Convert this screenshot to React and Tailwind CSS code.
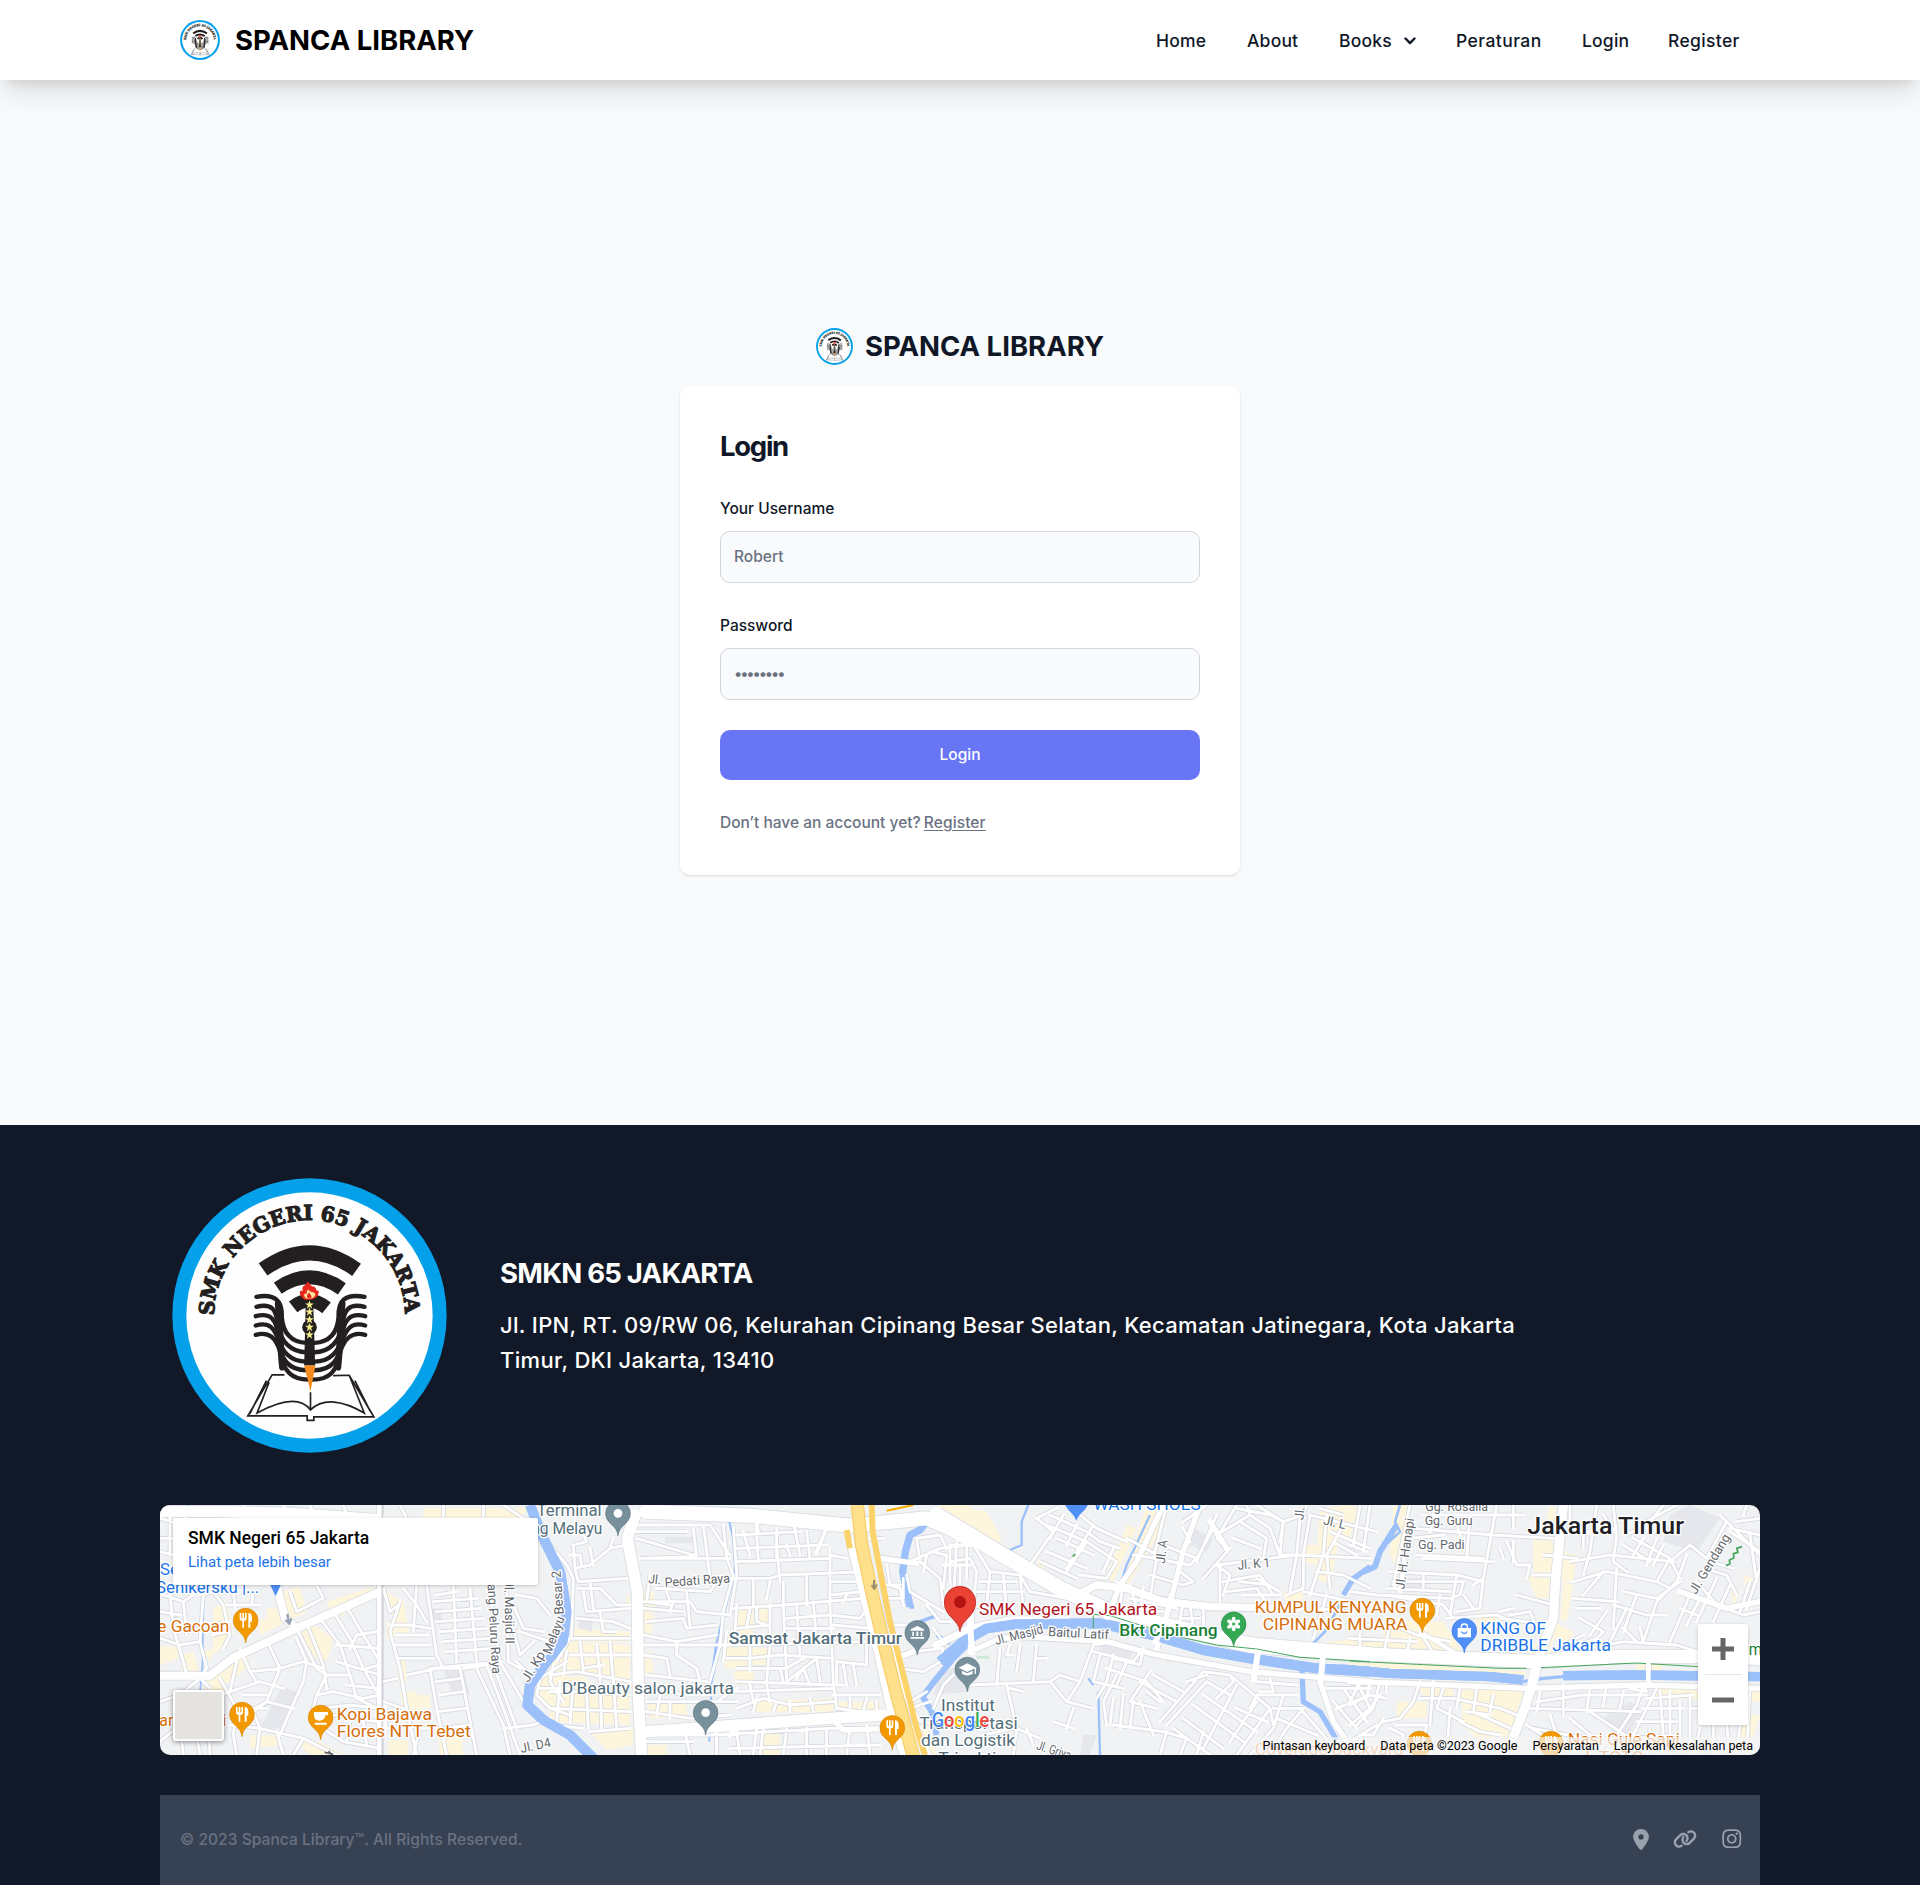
import React, { useId } from "react";
import { FaLocationDot, FaLink, FaInstagram } from "react-icons/fa6";

function SchoolLogo({ className }) {
  const arc = useId();
  return (
    <svg viewBox="37 38 824 824" className={className} aria-label="SMK Negeri 65 Jakarta">
      <circle cx="449" cy="450" r="411" fill="#05a0ea" />
      <circle cx="449" cy="450" r="369" fill="#fefefe" />
      <path id={arc} d="M163 450A286 286 0 0 1 735 450" fill="none" />
      <text fill="#231f20" stroke="#231f20" strokeWidth="3.5" fontFamily="'DejaVu Serif', serif" fontWeight="700" fontSize="62">
        <textPath href={"#" + arc} textLength="893" lengthAdjust="spacingAndGlyphs">SMK NEGERI 65 JAKARTA</textPath>
      </text>
      <g fill="none" stroke="#231f20">
        <path d="M310 312Q449 212 590 313" strokeWidth="45" />
        <path d="M354 368Q449 302 546 370" strokeWidth="41" />
        <path d="M400 424Q449 386 500 427" strokeWidth="41" />
        <g strokeWidth="13" strokeLinecap="round">
          <path d="M290 394C345 384 368 405 366 455C370 505 395 530 440 532" />
          <path d="M290 424C338 412 350 435 353 475C362 530 395 560 440 560" />
          <path d="M288 452C335 440 350 465 355 510C362 560 395 588 440 588" />
          <path d="M288 480C330 468 345 490 356 525C362 590 395 614 440 614" />
          <path d="M288 508C330 496 348 520 360 555C370 622 400 642 445 642" />
          <path d="M614 394C555 384 534 405 536 455C532 505 507 530 464 532" />
          <path d="M614 424C566 412 552 435 549 475C540 530 507 560 464 560" />
          <path d="M616 452C569 440 552 465 547 510C540 560 507 588 464 588" />
          <path d="M616 480C575 468 560 490 547 525C540 590 507 614 464 614" />
          <path d="M616 508C575 496 555 520 542 555C532 622 505 642 458 642" />
          <path d="M355 415C362 470 360 540 368 605M547 415C540 470 542 540 534 605" strokeWidth="20" />
        </g>
      </g>
      <path d="M374 628H337L264 751H442V764H462V754H642L568 629L520 630M320 645L270 745M585 645L630 735M328 650L292 742C360 705 420 690 452 733C490 695 550 705 613 742L568 629M452 680V733" fill="none" stroke="#231f20" strokeWidth="5" />
      <circle cx="449" cy="485" r="22" fill="#231f20" />
      <path d="M438 405H460L466 600H433Z" fill="#231f20" />
      <path d="M433 600H467L452 677Z" fill="#f58a1f" />
      <path d="M434 403C412 385 420 370 430 377C420 360 442 361 442 348C456 357 453 366 462 362C478 376 462 378 477 375C476 398 464 404 434 403Z" fill="#e5271d" />
      <path d="M438 398C427 387 437 380 441 386C439 373 447 370 448 376C459 384 468 377 466 390C463 396 450 404 438 398Z" fill="#ffe59a" />
      <path d="M444 399C438 390 445 383 449 381C450 390 458 388 454 398Z" fill="#e5271d" />
      {[418, 439, 462, 485, 508].map((y) => (
        <path key={y} transform={`translate(449 ${y})`} d="M0-13L3.5-4H13L5 2L8 12L0 6L-8 12L-5 2L-13-4H-3.5Z" fill="#f7ee8c" />
      ))}
    </svg>
  );
}

/* Each tile of the map is drawn in its own space of 3 units per pixel. */
const TILES = ["translate(-10 -10) scale(.33333)", "translate(390 -10) scale(.33333)", "translate(790 -10) scale(.33333)", "translate(1190 -10) scale(.33333)"];

const BLOCKS = [
  "M80 40H220L225 80H90ZM30 45H60V70H30ZM400 40H500L510 70H390ZM820 40H1110V75H820ZM1040 50L1160 30L1100 70ZM390 290L450 275L470 350L330 420L320 380L390 350ZM530 320L670 275L675 310L550 375ZM190 340L230 320L250 420L190 480ZM440 400L480 380L550 430L540 470L520 510L490 480ZM200 520L290 480L300 510L200 590ZM30 455L80 455L85 490L30 510ZM95 480L130 470L150 540L95 530ZM160 470L190 460L180 500ZM160 560L210 540L240 600L170 620ZM710 290L760 320L780 420L740 410ZM710 380L740 400L730 440L710 430ZM740 480L765 500L770 560L745 560ZM750 590L800 590L810 650L760 650ZM790 600H840V640H790ZM715 735H775V780H715ZM865 730L935 720L940 780H870ZM300 720L380 720L390 750L300 760ZM440 740L510 740L580 780H480ZM1200 500L1260 500V600L1190 630L1150 600L1170 540ZM1195 645L1240 640V670ZM350 340H390V370H350Z",
  "M280 290L310 290L320 350L280 360ZM285 355L312 360L300 430H280ZM280 470H305L310 540H280ZM60 400L240 410V440H70ZM50 440L240 450V570L190 560L100 530L30 530L0 560V500ZM0 560L100 540L150 600L240 590V690L0 680ZM120 710L250 700V750L170 765ZM555 340H610V410H555ZM620 340H655V390H620ZM530 410L610 400L605 450H530ZM525 450H600V520H525ZM605 460H655V510H600ZM550 530L610 520V570H560ZM290 620L410 620V670H300ZM610 620L850 610V650H610ZM860 620L990 620V650H870ZM640 710H690V780H630ZM290 750H350V780H290ZM1080 700L1130 690L1160 780H1120ZM1165 30H1260V140L1180 90ZM230 290L245 330H230Z",
  "M60 40L110 50L155 130L130 170L60 130ZM0 50L50 70V100L0 70ZM530 90L560 100L490 260L465 250ZM590 30L660 35L590 190L540 180ZM540 185L580 190L540 265H515ZM260 190L290 200L270 240ZM1110 40L1190 30L1140 270L1095 250ZM1065 150H1110L1100 210L1060 200ZM1000 290L1060 290L1055 350L1010 340ZM1130 440L1260 430V470L1150 460ZM1190 30L1225 40L1200 130L1160 110Z",
  "M130 30L180 30L170 130L140 220L120 180ZM550 130L610 130L605 240L550 230ZM600 30L620 40L610 90L590 70ZM530 240L600 250L595 310H560ZM640 170L680 180L670 260H635ZM640 260L670 270L650 380L630 370ZM610 380L670 410L660 450L610 430ZM380 350L440 370L430 420L380 410ZM100 370L280 380L340 480L0 480V420L100 430ZM0 500L250 510L530 530L510 550L0 520ZM190 560L310 560V610L230 610ZM330 570L520 590L480 720L390 740L340 690ZM860 490L940 500L930 535H860ZM920 560L1230 570V620L920 610ZM1180 240L1210 250L1190 290ZM1140 280L1170 290L1150 330ZM1170 660H1230L1200 760H1160ZM140 620H230V670H140ZM540 450L610 430L600 480H540Z",
];

const GREYS = [
  "M845 340H875V375H845ZM395 575L440 590L390 700L330 700ZM880 530L940 520L960 600L910 600Z",
  "M345 125H430V145H345ZM85 370L130 370L125 410L85 400ZM1170 540L1240 500L1260 590L1150 600Z",
  "M730 100L790 130L770 170L720 150ZM400 720L440 720L420 780H390ZM440 430L560 450L540 490L450 470Z",
  "M960 60L1020 30L1110 70L1040 170L940 140ZM160 250L220 250V275L170 280ZM760 670L840 620L880 650L820 740Z",
];

const MINOR = [
  "M30 70L100 90L110 60M30 170L70 180M30 130H70M60 70V180M40 300L100 320L130 300M60 300L70 400L100 500L110 540M30 430L90 450L150 440M100 320L110 420M30 350L90 360M150 300L190 290L220 330L240 420L220 460M160 300L150 440L170 520L150 550L180 580M230 330L330 330M250 290L255 340M310 290L305 330M190 390L240 380M190 420L230 410M270 460L300 530L390 520M350 435L390 520L350 620L310 650M260 500L240 590L170 620L90 690L30 740M440 400L500 520L530 540L500 600L480 680M470 385L520 510L530 580M510 370L570 450L600 540L620 610L680 640M550 350L600 430L640 520L680 590M590 335L640 420L690 500M420 290L440 350L520 310L500 270M440 430L470 500L460 560L420 650L390 720M390 520L460 500L520 520M500 600L550 590L640 610L690 600M480 680L560 660L680 680M510 640L600 630L690 640M530 540L600 540M400 580L330 560L240 590M300 650L350 620L430 640M310 650L330 700L460 730L560 780M240 690L330 700M300 530L320 560M210 550L260 640L250 720L260 780M260 640L350 640M280 600L350 600M330 700L320 780M380 710L400 780M500 690L580 740L690 760M600 680L590 740M640 680L650 750M460 730L430 780M170 620L180 780M90 690L100 780M130 660L150 780M30 620L90 600L150 550M30 690L130 660M560 450L690 460M600 460L620 420L680 410M650 520L690 510M560 500L690 540M590 570L690 580M750 320L720 410L750 520L770 640L800 780M700 280L720 350L745 330M760 280L800 330L830 380M720 390H780L840 400M800 270L790 410M830 270L860 480L880 520L840 520L860 640L890 780M860 300L920 290M850 320L980 310M860 350L990 340M860 380L1000 370M870 410L1010 400M880 440L1020 430M890 470L1030 460M910 270L920 500M960 280L980 500M740 420L830 420M740 450L840 450M740 490L850 490M770 540L860 520L930 520L980 780M840 520L1060 500M860 560L930 550M870 600L940 590M860 650L950 640M880 700L960 690M940 520L1010 510L1060 640L1110 780M980 520L1060 690L1080 780M1030 510L1100 700M1020 300L1050 500L1120 620M1070 280L1075 500L1110 520M1090 330L1120 400L1180 410M1090 400L1110 480L1150 440M1060 700L1150 690L1200 670M1100 300L1160 310L1200 360M1110 410L1200 440M1100 500L1130 530M790 780L810 700L890 700M700 620L760 640M700 650L760 670M710 700L790 690M700 560L740 550M1250 500L1170 550L1160 600L1200 640L1260 660M1210 510L1200 560L1240 620M1170 580L1260 580M280 30L290 60M400 30L420 60M480 30L490 60M580 30L590 60M750 30L770 70M880 30L880 70M1000 30V70M1060 30L1120 70",
  "M0 150L50 210L70 250L65 420L20 500M70 150L110 140L100 120M70 150L75 220L120 210L180 160L230 150M75 220L85 260L230 250M95 210L90 180L60 180M130 210L120 160M180 160L190 130M85 280L150 280L200 330L240 330M100 290L110 350L240 340M120 260L130 340M150 350L160 410L200 410M65 430L240 430M80 370L190 380L240 400M0 540L80 530L240 560M50 470L40 540M90 440L100 530M140 450L150 540M180 440L190 560M60 480L240 480M0 590L110 590L240 600M30 560L20 680M70 560L60 680M110 590L115 700M150 550L155 700M190 560L200 700M0 640L240 650M100 700L0 690M120 710L240 700M100 520L160 510M250 110L410 110M260 130L430 180M270 190L430 185M430 100L440 190M260 90L480 90L540 180M460 90L480 250M270 190L540 190M300 240L290 320L360 330M320 280L480 290L500 260M350 290L360 320M280 320H420L440 350L540 360M370 320L360 350M410 290L420 390M280 340L400 350M290 380L400 370L410 400L500 390M520 90L530 190L550 240L520 350L510 450L480 560M550 100L560 240L540 360M280 420L380 440L500 420M280 450L550 450L950 440M380 440V480L440 520L450 560M280 480L350 490L360 540M290 540L470 560M280 570L400 600H500M420 560L410 600M290 620L560 620M290 650L420 670L540 660M330 600L320 660M360 620V670M540 250H660M560 200L840 190M560 160L830 150M560 120L750 110M580 110L600 180M620 60L625 110M620 120L625 200M680 150L690 260M680 100V190M730 80L750 180M710 150L720 180M770 110L780 190M660 250L690 240L950 230M840 160L840 330M840 180L890 190M550 340L700 330L940 310M610 250V330M660 260L650 310M700 260V330M770 240V330M840 300L940 290M840 260L920 260M560 330L555 410M600 340L590 400M620 340V380L650 390M660 330V450M700 330L710 550M740 330L750 480M790 320L800 450M840 330L850 560M880 320L890 300M840 360L930 370L960 330M850 390L960 400M560 400L660 390M710 370L840 360M710 400H850M530 410L520 500M600 450V530M660 450L650 560M530 490H600L690 480L850 490M560 520L710 520L760 490M560 560L850 570M600 570L610 620M650 570L660 620M690 520L700 560M710 560L800 490M760 520L780 570M740 550L760 520M800 490L810 560M850 560L860 640M860 500V570L880 570M880 510L890 570M910 510L920 570M950 440V510L860 500M290 720L480 720L840 700L1000 700M400 690L420 780M500 700V780M560 710L570 780M620 700L610 780M640 700L630 780M710 700L700 780M770 700V780M830 700V780M900 700L890 780M950 690L960 780M540 760L990 750M280 740L430 740M500 620L560 580M550 590L850 580M560 640L640 610L720 630L850 620M620 610L610 650M680 620L670 650M720 620V650M780 610L790 650M850 600L990 600M900 610V650M950 610L940 650M980 620V660M860 640L1000 660M1010 560L1050 570M990 190L1080 200L1170 160L1260 150M1010 210L1020 270L1050 280L1060 330M1000 270H1050M1010 310L1060 310L1060 250M960 130H1000M1100 130L1110 200L1170 250L1180 330L1230 350M1100 130L1170 120L1190 160M1130 180L1120 230M1140 170L1190 180L1180 280M1200 160V260M1180 210H1260M1230 210V280M1070 240L1080 290L1180 350M1130 330L1170 380L1200 380M1020 390L1080 390M1050 480L1090 470L1180 460L1170 500L1120 530L1040 520M1150 400L1180 440L1240 410M1130 590L1080 620L1110 680L1260 700M1080 640L1140 620M1210 540L1180 570L1150 640",
  "M0 150H70L120 230L210 240L240 290L350 310M0 200L60 190L80 230M20 140L10 320M50 150V250M80 230L70 330L0 340M70 290H220M120 230L110 330M160 240L170 350M90 260L200 260M210 240L220 340M0 350L110 330M260 70L320 40M260 70L310 110L240 210M290 90L410 140L500 200M300 60L410 110M340 60L300 130M380 90L350 150M410 140L350 230M320 130L430 180M290 170L410 220M270 200L380 250M410 110L450 140L510 160M390 60L440 100L530 140M430 90L350 220M500 200L470 250L390 240M490 160L460 230M550 180L620 190M530 130L660 200L720 210M650 30L610 190L720 210L740 190M620 190L600 310M640 150L740 190L790 100M700 100L720 140M770 30L700 80M800 60L740 200M860 30L800 130L830 160M800 210L840 240L820 300M840 160L760 250M800 120L900 60L960 100L990 180L1050 180M860 40L960 60L1000 80L990 180M870 80L950 130L940 190M900 60L890 30M850 130L930 160M920 30L1000 80L1060 60L1070 30M800 210L1040 180L1260 190M810 210V320M820 260L930 240L970 300M830 290L920 280L940 310M870 260L960 270M920 250L990 290M880 300H990M1000 80L990 140M1050 70L1040 180L1020 290M1080 60L1060 180L1060 280L1010 300M1130 60L1120 180L1080 300M1180 90L1130 180L1140 280M1080 60L1200 90M1140 110L1260 160M1150 140L1220 180M1110 40L1180 60M1130 300L1090 430M1100 230L1180 240L1260 280M1060 290L1260 330M1100 340L1200 350M500 260L630 310L780 330L1020 340M520 260L510 330M540 270L560 340M580 280L570 350M620 310L700 320L680 430L640 430M660 300L640 400L620 440M600 240L700 270L730 260L690 230M720 330L730 400L790 410M760 330V390M800 330L840 340M540 310L680 340M560 340L640 350M690 370L750 370M700 400L780 400M150 460L140 570M60 570L300 560L330 540L390 560L430 450L490 440M180 450L170 480L190 480M210 450L200 530M260 450L250 560M260 490L290 490M170 570L200 700L190 780M180 580L220 590M300 560L350 620L430 640M390 560L350 620M350 700L370 640M430 470L550 500L580 460M450 480L430 560L520 580M490 480L470 560L440 610M530 500L500 570M470 520L590 560L640 620M500 540L460 620L470 690M490 610L480 690M520 600L510 700M550 620L540 700M600 530L540 620L620 640M570 560L680 620M610 540L700 590M590 590L630 620M570 620L610 720M490 690L640 710L710 730M630 680L760 530L840 540L960 640L970 690M650 690L770 560L840 600M710 560L770 540M760 600L920 710M730 630L880 740M700 670L820 760M670 700L780 780M860 570L760 760M840 540L850 560L800 610M960 640L860 780M900 640L920 600L1040 600M860 640L950 680M920 620L840 740M1000 600L970 700L900 780M970 640L1060 640M1060 640L1010 700L960 780M910 500L920 560L1040 570M930 590L970 590L960 550M1050 640L1120 720L1170 780M980 670L1100 720M1150 620L1220 700M1180 580L1250 680M1130 580H1260M1160 640L1260 600M1220 560L1260 640M580 460L570 510L490 490M650 480L640 490M200 700L270 730M100 720L190 700M230 700L250 750M310 680L370 700M650 710L630 780M710 730L690 780M760 710L740 780",
  "M0 90L80 110M30 30L10 150M60 30L40 170M0 150L50 170M180 30L130 270L150 290M220 60H430L520 60M190 100L430 120L610 130M180 130L280 120M200 180L400 190M260 60L240 110M310 60L330 120M360 60L350 190M440 30L400 250L370 270M220 190L430 200M450 160L460 190M490 30V100M470 140L500 210L540 210L530 250M490 140V200M580 180L680 190M120 230L320 240L400 260M110 280L300 290M130 260L340 260M160 240L150 290M220 240V280M320 240L300 360M340 260L330 300L300 310M400 250L390 340L320 350M0 290L80 300L300 310M110 300L280 330L310 370M270 300L260 360M290 370L440 360L490 380M340 300L370 340M480 360L540 350L560 400L610 370M500 300L610 330M450 370L600 390M550 240L610 240M660 30V100L720 110M700 80V160M740 30L720 170L700 240M760 60L800 120L790 200L830 230M660 110L740 120M790 30L800 130M660 200L780 180L970 200M670 260L770 230L920 260L960 280M670 310L800 320M680 340L750 340M760 230L700 300M800 220L790 400M690 370L760 410L720 450M770 350L720 420M830 340L780 440M860 300L820 410M790 330L890 360L950 360M820 290L920 310L990 260M850 130L960 190L990 250M820 150L900 200M830 120L900 80L940 30M870 90L980 30M880 130L850 180M920 130L890 210M940 150L910 210M960 190L920 260M960 200L1020 150L1070 190L1130 80M1010 180L980 260L920 320L880 440M1020 300L960 440M1060 220L1130 240L1160 300M1080 200L1150 220M1040 260L1110 340M1000 290L1180 360L1230 350M1050 310L1010 390M1100 250L1040 380M1140 270L1090 380M990 340L1040 360M1110 60L1230 180M1140 100L1230 120M1140 110L1230 170M1160 80L1230 70M1200 120L1220 260M1190 30L1180 60M1230 220L1190 340M1200 260L1170 350M0 400L110 380L200 420L300 440M0 430L200 440M120 390L100 480M30 410V480M180 430L170 480M210 410L260 490M450 350L490 340M610 480L820 440L980 450L1040 470M640 450L700 420M660 460L740 430M820 400L860 440M870 400L880 440M100 680L150 670L190 620L210 560M100 670L70 720L30 720M140 690L230 690L220 740M120 700L160 720L150 780M210 610L310 610M250 560L240 690M280 580L260 640L340 680M300 640L290 780M310 610L450 640L500 660M330 580L320 640M380 580L370 650L480 700M430 600L420 650M330 680L390 710L450 720M350 650L420 660M540 640L870 650M560 620L700 600L890 600M570 590L560 650M640 570L640 660M720 580L710 650M770 570L760 630M820 590L810 640M550 700L760 740M600 660L620 720M660 670L720 720M530 690L640 760M720 650L840 730M880 570L860 630L760 780M920 580L820 780M890 610L1030 600M880 640L1000 640M860 680L980 680M840 730L980 720M930 590L940 720M960 590V780M990 620V780M1020 600V780M840 580L890 590L880 570M900 700L890 780M1020 640H1050M1050 700L1030 780M1130 690L1140 780M1170 690L1160 780M1200 580L1190 780M1090 690V780M0 630L60 600L110 610M30 560L0 620M60 560L50 610M0 690L60 640L90 600M90 560L70 640L20 690M0 740L80 690M110 560V590",
];

const MAJOR = [
  [0, 34, "M30 50H200L430 55L690 75"],
  [0, 24, "M380 270L405 370L440 400M30 542H180L250 488L440 400L690 290M700 700L700 640"],
  [0, 18, "M690 30V780"],
  [1, 42, "M290 50L600 62L900 92L1130 70L1200 100L1260 135"],
  [1, 34, "M255 60L232 130L262 290L265 600L275 780M290 710L840 670L1000 660"],
  [1, 22, "M900 140L930 260L985 480L1020 640L1060 780"],
  [1, 16, "M840 665L880 705L1040 700M540 720L550 710M990 190L1100 205M1040 490L1090 470"],
  [1, 12, "M830 100L800 170M620 90V110M990 240L1020 400L1060 580L1100 700L1140 780"],
  [2, 46, "M-40 60L150 175L330 280L480 350L640 390L900 450L1260 480"],
  [2, 22, "M-40 450L60 400L180 375H350M60 350L65 470M380 300L440 270L530 280L640 320L780 335L1020 340"],
  [2, 16, "M60 470L150 430L220 425L470 440L620 480L900 530L1260 560M750 30L700 170L640 400L620 460M640 30L560 200L510 270L470 370M1120 470L1110 560L1150 680L1220 780M925 460L910 555M780 80L830 160"],
  [3, 40, "M0 475L340 490L560 500L800 485L1050 485L1230 490"],
  [3, 28, "M640 30L618 240L610 370L565 490L550 560L520 650L485 740"],
  [3, 16, "M0 560L170 565L530 580L880 570L1230 580M895 480V570M990 290L1130 340L1230 320"],
  [3, 12, "M210 410L310 470M170 130L150 290"],
];

const WATER = [
  [0, 30, "M1140 30L1180 130L1230 230L1250 350L1238 440L1190 500L1140 570L1132 630L1180 675L1260 720L1330 790"],
  [0, 5, "M115 30V120M160 290L158 500L150 590"],
  [1, 22, "M1130 80L1110 105L1080 120L1066 170L1058 230L1075 310L1080 335"],
  [1, 12, "M1078 335H1092M1160 420L1200 445"],
  [1, 6, "M530 50L550 130L556 220L500 440L485 560L478 740"],
  [1, 10, "M500 450L487 545M1110 380L1160 362"],
  [1, 18, "M1260 440L1210 490L1160 550L1118 605M1118 605L1145 650L1160 720"],
  [2, 30, "M-30 500L40 440L110 400L190 388L450 385L610 420L760 465L900 490L1100 520L1260 530"],
  [2, 7, "M600 60L530 210L505 290L465 380M235 30L215 80V150L180 165M445 590L450 780M415 550L430 570"],
  [2, 16, "M1055 500L1060 620L1110 650L1160 735M1260 215L1210 250L1180 300"],
  [2, 8, "M1180 310L1125 410L1085 450"],
  [3, 8, "M150 30L135 80L150 110L95 160"],
  [3, 18, "M140 90L90 170L75 215L40 230"],
  [3, 8, "M45 230L0 265"],
  [3, 28, "M-30 522L120 535L420 545L520 555M640 542L860 540L1240 545"],
  [3, 10, "M520 560L580 550L640 545"],
];

const PINS = {
  food: <path d="M-18-22V-6Q-18 2-10 2V22H-5V2Q3 2 3-6V-22H-2V-6H-5V-22H-10V-6H-13V-22ZM8 22V-22Q19-22 19-8V4H14V22Z" fill="#fff" />,
  cup: <path d="M-20-16H22V-6H14Q12 10-4 10Q-20 10-20-6ZM-18 16H18V22H-18Z" fill="#fff" />,
  dot: <circle r="13" fill="#fff" />,
  bank: <path d="M0-20L20-10V-6H-20V-10ZM-15-3H-10V10H-15ZM-3-3H3V10H-3ZM10-3H15V10H10ZM-20 13H20V18H-20Z" fill="#fff" />,
  school: <path d="M0-18L26-5L0 8L-26-5ZM-16 4L0 12L16 4V13Q0 24-16 13ZM22-4H26V14H22Z" fill="#fff" />,
  flower: <g fill="#fff">{[0, 60, 120, 180, 240, 300].map((a) => <ellipse key={a} cy="-13" rx="6" ry="9" transform={`rotate(${a})`} />)}</g>,
  bag: <g><path d="M-20-8H20V20H-20Z" fill="#fff" /><path d="M-9-6V-12Q-9-20 0-20Q9-20 9-12V-6" fill="none" stroke="#fff" strokeWidth="4" /><path d="M-9 3Q0 14 9 3" fill="none" stroke="#4b8df8" strokeWidth="4" /></g>,
};

function Pin({ x, y, color, edge, kind }) {
  return (
    <g transform={`translate(${x} ${y})`}>
      <path d="M0 67C-3 45-14 40-27 26A37 37 0 1 1 27 26C14 40 3 45 0 67Z" fill={color} stroke={edge} strokeWidth="2" />
      {PINS[kind]}
    </g>
  );
}

function Label({ x, y, w, size = 48, color = "#d56e0c", weight = 400, rotate = 0, children }) {
  return (
    <text x={x} y={y} textLength={w} lengthAdjust="spacingAndGlyphs" fontSize={size} fill={color} fontWeight={weight} stroke="#fff" strokeWidth="8" strokeLinejoin="round" paintOrder="stroke" transform={rotate ? `rotate(${rotate} ${x} ${y})` : undefined}>
      {children}
    </text>
  );
}

const ORANGE = { color: "#f29900", edge: "#d98200" };
const SLATE = { color: "#78909c", edge: "#5c7480" };
const BLUE = { color: "#4f8ff7", edge: "#3b78e0" };
const STREET = { color: "#62676d", size: 39 };
const PLACE = "#546e7a";

function MapDrawing() {
  return (
    <svg viewBox="0 0 1600 250" className="block h-[250px] w-[1600px]" fontFamily="Roboto, sans-serif">
      <rect width="1600" height="250" fill="#f0f2f4" />
      {TILES.map((t, i) => (
        <g key={i} transform={t}>
          <path d={BLOCKS[i]} fill="#fdf5dc" />
          <path d={GREYS[i]} fill="#e6e7ec" />
        </g>
      ))}
      <g fill="none" strokeLinejoin="round">
        {TILES.map((t, i) => <path key={i} transform={t} d={MINOR[i]} stroke="#d6d9df" strokeWidth="13.5" />)}
        {MAJOR.map(([t, w, d], i) => <path key={i} transform={TILES[t]} d={d} stroke="#d9dce1" strokeWidth={w + 5} />)}
        {WATER.map(([t, w, d], i) => <path key={i} transform={TILES[t]} d={d} stroke="#9cc0f9" strokeWidth={w} />)}
        <g strokeLinecap="round">
          {TILES.map((t, i) => <path key={i} transform={t} d={MINOR[i]} stroke="#fff" strokeWidth="8.5" />)}
          {MAJOR.map(([t, w, d], i) => <path key={i} transform={TILES[t]} d={d} stroke="#fff" strokeWidth={w} />)}
        </g>
        {WATER.filter(([t, w]) => w > 25).map(([t, w, d], i) => <path key={i} transform={TILES[t]} d={d} stroke="#9cc0f9" strokeWidth={w} />)}
        <g transform={TILES[0]}>
          <path d="M697 30V780" stroke="#cfd2d7" strokeWidth="5" />
        </g>
        <g transform={TILES[1]}>
          <path d="M965 30L968 110L985 200L1020 380L1060 540L1100 700L1125 780" stroke="#fcd36b" strokeWidth="18" />
          <path d="M890 105L900 160" stroke="#fcd36b" strokeWidth="18" />
          <path d="M922 30L935 150L965 290L1000 440L1040 600L1090 785" stroke="#f8c95f" strokeWidth="40" />
          <path d="M922 30L935 150L965 290L1000 440L1040 600L1090 785" stroke="#fde08c" strokeWidth="34" />
          <path d="M1010 47L1090 30" stroke="#f9ab00" strokeWidth="6" />
          <path d="M972 255V282M965 270L973 282L981 268" stroke="#a09070" strokeWidth="6" />
        </g>
        <g transform={TILES[2]} stroke="#45a65c" strokeWidth="3">
          <path d="M430 358L480 362L570 390L700 428L800 450L920 462L1050 487L1260 500M430 360V400" />
          <path d="M368 185L376 177" strokeWidth="5" />
          <path d="M80 487H118" stroke="#ceead6" strokeWidth="9" />
        </g>
        <g transform={TILES[3]} stroke="#45a65c" strokeWidth="3">
          <path d="M0 498L200 508L450 520H530M572 518L860 504L1045 515" />
          <path d="M1128 212L1140 206L1138 196L1152 188L1150 176L1164 172L1160 160L1176 155" strokeWidth="5" />
        </g>
        <g transform={TILES[2]} stroke="#fff" strokeWidth="18"><path d="M1120 470L1112 560M925 465L912 550M630 400L615 450M60 380L65 460" /></g>
        <g transform={TILES[3]} stroke="#fff"><path d="M895 490V570" strokeWidth="14" /><path d="M565 490L545 570" strokeWidth="28" /></g>
      </g>

      <g transform={TILES[0]}>
        <Label x={30} y={240} w={148} color="#1a73e8">Senike</Label>
        <Label x={18} y={294} w={310} color="#1a73e8">Senikersku |...</Label>
        <path d="M358 265H395L377 303Z" fill="#4f8ff7" />
        <path d="M412 357L417 385M406 375L418 386L424 370" fill="none" stroke="#9aa0b5" strokeWidth="7" />
        <Label x={22} y={411} w={216}>e Gacoan</Label>
        <Pin x={287} y={376} {...ORANGE} kind="food" />
        <Label x={28} y={692} w={200}>ar Meruni</Label>
        <Pin x={276} y={658} {...ORANGE} kind="food" />
        <Pin x={512} y={667} {...ORANGE} kind="cup" />
        <Label x={560} y={676} w={286}>Kopi Bajawa</Label>
        <Label x={560} y={727} w={402}>Flores NTT Tebet</Label>
        <Label x={1009} y={200} w={338} {...STREET} rotate={87}>Gudang Peluru Raya</Label>
        <Label x={1063} y={255} w={192} {...STREET} rotate={89}>Jl. Masjid II</Label>
        <Label x={1135} y={565} w={112} {...STREET} rotate={-59}>Jl. Kp.</Label>
        <Label x={1202} y={480} w={118} {...STREET} rotate={-69}>Melayu</Label>
        <Label x={1241} y={358} w={132} {...STREET} rotate={-94}>Besar 2</Label>
        <Label x={1114} y={774} w={92} {...STREET} rotate={-12}>Jl. D4</Label>
        <path d="M524 772L550 778M536 768L546 780" stroke="#62676d" strokeWidth="5" />
      </g>
      <g transform={TILES[1]}>
        <Label x={-40} y={64} w={195} color={PLACE}>Terminal</Label>
        <Label x={-204} y={116} w={361} color={PLACE}>Kampung Melayu</Label>
        <Pin x={204} y={55} {...SLATE} kind="dot" />
        <Label x={294} y={264} w={38} {...STREET} rotate={6}>Jl.</Label>
        <Label x={345} y={276} w={196} {...STREET} rotate={-4}>Pedati Raya</Label>
        <Label x={536} y={447} w={520} color={PLACE} weight={500}>Samsat Jakarta Timur</Label>
        <Pin x={1102} y={413} {...SLATE} kind="bank" />
        <Label x={35} y={597} w={517} color={PLACE}>D’Beauty salon jakarta</Label>
        <Pin x={467} y={653} {...SLATE} kind="dot" />
        <Pin x={1027} y={698} {...ORANGE} kind="food" />
      </g>
      <g transform={TILES[2]}>
        <path d="M342 20H417C410 48 388 52 379 77C370 52 350 48 342 20Z" fill="#4f8ff7" />
        <Label x={430} y={44} w={322} color="#1a73e8">WASH SHOES</Label>
        <Label x={644} y={206} w={70} {...STREET} rotate={-83}>Jl. A</Label>
        <Label x={864} y={224} w={98} {...STREET} rotate={-5}>Jl. K 1</Label>
        <Label x={1060} y={76} w={80} {...STREET} rotate={-84}>Jl. M</Label>
        <Label x={1118} y={88} w={68} {...STREET} rotate={12}>Jl. L</Label>
        <Label x={138} y={450} w={148} {...STREET} rotate={-14}>Jl. Masjid</Label>
        <Label x={294} y={423} w={182} {...STREET} rotate={3}>Baitul Latif</Label>
        <Label x={257} y={762} w={106} {...STREET} rotate={18}>Jl. Griya</Label>
        <path d="M30 410C26 372-17 366-17 321A47 47 0 1 1 77 321C77 366 34 372 30 410Z" fill="#ea4335" stroke="#b31412" strokeWidth="2" />
        <circle cx="30" cy="321" r="18" fill="#b31412" />
        <Label x={87} y={359} w={535} color="#b31422">SMK Negeri 65 Jakarta</Label>
        <Label x={508} y={422} w={295} color="#188038" weight={500}>Bkt Cipinang</Label>
        <Pin x={851} y={387} color="#34a853" edge="#1e8e3e" kind="flower" />
        <Label x={914} y={354} w={456}>KUMPUL KENYANG</Label>
        <Label x={938} y={406} w={434}>CIPINANG MUARA</Label>
        <Pin x={52} y={523} {...SLATE} kind="school" />
        <Label x={-27} y={648} w={162} color={PLACE}>Institut</Label>
        <Label x={-92} y={702} w={295} color={PLACE}>Transportasi</Label>
        <Label x={-87} y={753} w={282} color={PLACE}>dan Logistik</Label>
        <Label x={-35} y={807} w={174} color={PLACE}>Trisakti</Label>
        <Label x={914} y={780} w={446} color="#e5924c">Coverage Backyard</Label>
        <text x="-55" y="697" fontSize="58" fontWeight="500" textLength="173" lengthAdjust="spacingAndGlyphs" stroke="#fff" strokeWidth="5" paintOrder="stroke">
          <tspan fill="#4285f4">G</tspan><tspan fill="#ea4335">o</tspan><tspan fill="#fbbc04">o</tspan><tspan fill="#4285f4">g</tspan><tspan fill="#34a853">l</tspan><tspan fill="#ea4335">e</tspan>
        </text>
      </g>
      <g transform={TILES[3]}>
        <Label x={226} y={48} w={188} {...STREET}>Gg. Rosalia</Label>
        <Label x={224} y={90} w={144} {...STREET}>Gg. Guru</Label>
        <Label x={204} y={163} w={140} {...STREET}>Gg. Padi</Label>
        <Label x={163} y={284} w={215} {...STREET} rotate={-82}>Jl. H. Hanapi</Label>
        <Label x={1038} y={300} w={202} {...STREET} rotate={-59}>Jl. Gendang</Label>
        <Label x={532} y={117} w={470} color="#202124" size={70} weight={500}>Jakarta Timur</Label>
        <Pin x={217} y={346} {...ORANGE} kind="food" />
        <Pin x={343} y={407} {...BLUE} kind="bag" />
        <Label x={391} y={416} w={197} color="#1a73e8">KING OF</Label>
        <Label x={391} y={468} w={392} color="#1a73e8">DRIBBLE Jakarta</Label>
        <Label x={1196} y={480} w={40} color="#188038">m</Label>
        <Pin x={208} y={745} {...ORANGE} kind="food" />
        <Pin x={603} y={745} {...ORANGE} kind="food" />
        <Label x={653} y={751} w={336}>Nasi Gule Sapi</Label>
        <Label x={705} y={805} w={176}>I. TOTO</Label>
      </g>
    </svg>
  );
}

function LocationMap() {
  return (
    <div className="relative h-[250px] overflow-hidden rounded-[10px] font-[Roboto,sans-serif]">
      <MapDrawing />
      <div className="absolute left-[13px] top-[13px] h-[67px] w-[365px] rounded-[2px] bg-white px-[15px] pt-[9px] shadow-[0_1px_4px_-1px_rgba(0,0,0,0.3)]">
        <p className="text-[17.5px] leading-[22px] font-medium text-black">SMK Negeri 65 Jakarta</p>
        <p className="mt-[3px] text-[15px] leading-[21px] text-[#1a73e8]">Lihat peta lebih besar</p>
      </div>
      <div className="absolute bottom-[14px] left-[13px] size-[51px] rounded-[3px] border-2 border-white bg-[#e5e3df] shadow-[0_1px_5px_rgba(0,0,0,0.45)]" />
      <div className="absolute right-3 top-[119px] flex h-[101px] w-[50px] flex-col items-center rounded-[2px] bg-white shadow-[0_1px_4px_-1px_rgba(0,0,0,0.3)]">
        <div className="flex h-[50px] items-center">
          <svg viewBox="0 0 22 22" className="size-[22px]"><path d="M0 8.5H8.5V0H13.5V8.5H22V13.5H13.5V22H8.5V13.5H0Z" fill="#666" /></svg>
        </div>
        <div className="h-px w-[37px] bg-[#e6e6e6]" />
        <div className="flex h-[50px] items-center">
          <svg viewBox="0 0 22 22" className="size-[22px]"><path d="M0 8.5H22V13.5H0Z" fill="#666" /></svg>
        </div>
      </div>
      <div className="absolute bottom-0 right-0 flex h-[18px] items-center gap-[15px] bg-[#f5f5f5]/70 pl-2 pr-[7px] text-[12.5px] leading-[18px] whitespace-nowrap text-black">
        <span>Pintasan keyboard</span>
        <span>Data peta ©2023 Google</span>
        <span>Persyaratan</span>
        <span>Laporkan kesalahan peta</span>
      </div>
    </div>
  );
}

function Header() {
  return (
    <header className="relative z-10 bg-white shadow-xl">
      <div className="mx-auto flex h-20 w-[1600px] items-center justify-between px-5">
        <a className="flex items-center gap-[15px]">
          <SchoolLogo className="size-10" />
          <span className="text-[27.5px] leading-10 font-bold whitespace-nowrap text-black">SPANCA LIBRARY</span>
        </a>
        <nav className="flex gap-10 pt-[2px] text-[17.5px] leading-7 font-medium tracking-[0.2px] whitespace-nowrap text-gray-900">
          <a className="w-[51px]">Home</a>
          <a className="w-[52px]">About</a>
          <a className="flex w-[77px] items-center justify-between">
            Books
            <svg viewBox="0 0 12 8" className="h-2 w-3" fill="none" stroke="currentColor" strokeWidth="2.4" strokeLinecap="round" strokeLinejoin="round"><path d="M1.5 1.5L6 6.2L10.5 1.5" /></svg>
          </a>
          <a className="w-[86px] tracking-[0.45px]">Peraturan</a>
          <a className="w-[46px]">Login</a>
          <a className="w-[72px] tracking-[0.35px]">Register</a>
        </nav>
      </div>
    </header>
  );
}

function LoginSection() {
  const field = "mt-3 block h-[52px] w-full rounded-[10px] border border-gray-300 bg-gray-50 px-[13px] pb-[2px] text-[15.5px] font-medium placeholder:text-gray-500";
  return (
    <main className="flex h-[1045px] flex-col items-center bg-gray-50 pt-[247px]">
      <a className="flex h-[38px] items-center gap-[12px] text-gray-900">
        <SchoolLogo className="size-[37px]" />
        <span className="text-[27.5px] leading-[38px] font-bold whitespace-nowrap">SPANCA LIBRARY</span>
      </a>
      <form className="mt-[21px] h-[489px] w-[560px] rounded-[10px] bg-white p-10 shadow-sm">
        <h1 className="text-[27.5px] leading-10 font-bold tracking-[-1.3px] text-gray-900">Login</h1>
        <label className="mt-8 block text-[15.5px] leading-[21px] font-medium text-gray-900">Your Username</label>
        <input className={field} placeholder="Robert" />
        <label className="mt-8 block text-[15.5px] leading-[21px] font-medium text-gray-900">Password</label>
        <input className={field + " tracking-[-2.1px]"} type="password" placeholder="••••••••" />
        <button type="button" className="mt-[30px] block h-[50px] w-full rounded-[10px] bg-[#6875f5] text-[15.5px] font-medium text-white">Login</button>
        <p className="mt-[31px] text-[15.5px] leading-[23px] font-medium whitespace-nowrap text-gray-500">
          Don’t have an account yet? <a className="-ml-px tracking-[0.1px] underline underline-offset-2">Register</a>
        </p>
      </form>
    </main>
  );
}

function Footer() {
  return (
    <footer className="h-[760px] bg-[#111928]">
      <div className="mx-auto flex h-full w-[1600px] flex-col">
        <div className="flex pt-[53px] pl-[12px]">
          <SchoolLogo className="size-[275px] shrink-0" />
          <div className="w-[1060px] pt-[75px] pl-[53px] text-white">
            <h2 className="text-[27.5px] leading-10 font-bold tracking-[-0.75px] whitespace-nowrap">SMKN 65 JAKARTA</h2>
            <p className="mt-[15px] text-[22px] leading-[35px] font-medium tracking-[0.325px] whitespace-nowrap">
              Jl. IPN, RT. 09/RW 06, Kelurahan Cipinang Besar Selatan, Kecamatan Jatinegara, Kota Jakarta<br />Timur, DKI Jakarta, 13410
            </p>
          </div>
        </div>
        <div className="mt-[52px]"><LocationMap /></div>
        <div className="mt-10 flex h-[90px] items-center justify-between bg-gray-700 px-5">
          <span className="text-[15.5px] font-medium tracking-[0.06px] text-gray-500">© 2023 Spanca Library™. All Rights Reserved.</span>
          <div className="-mr-[2px] flex items-center gap-[24px] pb-[2px] text-gray-400">
            <FaLocationDot className="h-[21px] w-4" />
            <FaLink className="size-6" />
            <FaInstagram className="size-[21.5px]" />
          </div>
        </div>
      </div>
    </footer>
  );
}

export default function App() {
  return (
    <div className="h-[1885px] w-[1920px] overflow-hidden font-[Inter,sans-serif]">
      <Header />
      <LoginSection />
      <Footer />
    </div>
  );
}
